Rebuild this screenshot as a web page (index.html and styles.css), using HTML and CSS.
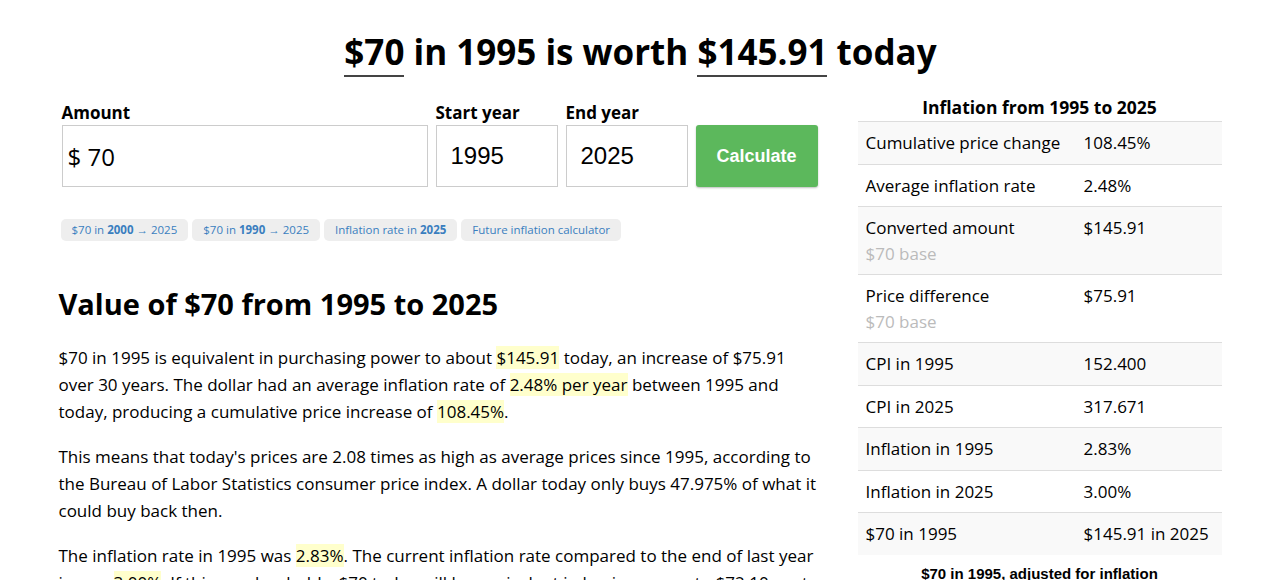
FILE: index.html
```html
<!DOCTYPE html>
<html lang="en">
<head>
  <meta charset="UTF-8" />
  <meta name="viewport" content="width=device-width, initial-scale=1.0" />
  <title>$70 in 1995 is worth $145.91 today</title>
  <link rel="stylesheet" href="styles.css">
</head>
<body>
  <main class="page">
    <h1 class="headline"><span class="mark">$70</span> in 1995 is worth <span class="mark">$145.91</span> today</h1>

    <div class="columns">
      <div class="main-col">
        <form class="calc" onsubmit="return false">
          <div class="field field-amount">
            <label for="amount">Amount</label>
            <div class="input-box input-amount">$ <span id="amount">70</span></div>
          </div>
          <div class="field">
            <label for="startYear">Start year</label>
            <div class="input-box input-year" id="startYear">1995</div>
          </div>
          <div class="field">
            <label for="endYear">End year</label>
            <div class="input-box input-year" id="endYear">2025</div>
          </div>
          <div class="field">
            <label>&nbsp;</label>
            <button class="calc-btn" type="submit">Calculate</button>
          </div>
        </form>

        <div class="pills">
          <a class="pill" href="#">$70 in <b>2000</b> &rarr; 2025</a>
          <a class="pill" href="#">$70 in <b>1990</b> &rarr; 2025</a>
          <a class="pill" href="#">Inflation rate in <b>2025</b></a>
          <a class="pill" href="#">Future inflation calculator</a>
        </div>

        <h2>Value of $70 from 1995 to 2025</h2>
        <p>$70 in 1995 is equivalent in purchasing power to about <span class="hl">$145.91</span> today, an increase of $75.91 over 30 years. The dollar had an average inflation rate of <span class="hl">2.48% per year</span> between 1995 and today, producing a cumulative price increase of <span class="hl">108.45%</span>.</p>
        <p>This means that today's prices are 2.08 times as high as average prices since 1995, according to the Bureau of Labor Statistics consumer price index. A dollar today only buys 47.975% of what it could buy back then.</p>
        <p>The inflation rate in 1995 was <span class="hl">2.83%</span>. The current inflation rate compared to the end of last year is now <span class="hl">3.00%</span>. If this number holds, $70 today will be equivalent in buying power to $72.10 next year.</p>
      </div>

      <aside class="side-col">
        <div class="side-title">Inflation from 1995 to 2025</div>
        <table class="stats">
          <tr><td>Cumulative price change</td><td>108.45%</td></tr>
          <tr><td>Average inflation rate</td><td>2.48%</td></tr>
          <tr><td>Converted amount<br><span class="muted">$70 base</span></td><td>$145.91</td></tr>
          <tr><td>Price difference<br><span class="muted">$70 base</span></td><td>$75.91</td></tr>
          <tr><td>CPI in 1995</td><td>152.400</td></tr>
          <tr><td>CPI in 2025</td><td>317.671</td></tr>
          <tr><td>Inflation in 1995</td><td>2.83%</td></tr>
          <tr><td>Inflation in 2025</td><td>3.00%</td></tr>
          <tr><td>$70 in 1995</td><td>$145.91 in 2025</td></tr>
        </table>
        <div class="chart-title">$70 in 1995, adjusted for inflation</div>
      </aside>
    </div>
  </main>
</body>
</html>
```

FILE: styles.css
```css
body {
  margin: 0;
  font-family: "Open Sans", "Noto Sans", sans-serif;
  color: #000;
  background: #fff;
}
.page {
  width: 1164px;
  margin: 0 auto;
}
.headline {
  font-size: 35px;
  font-weight: bold;
  text-align: center;
  margin: 31px 0 24px;
  line-height: 1.2;
}
.mark {
  border-bottom: 2px solid #444;
}
.columns {
  display: flex;
  gap: 40px;
  align-items: flex-start;
}
.main-col {
  width: 759px;
}
.side-col {
  width: 364px;
}

.calc {
  display: flex;
  gap: 8px;
  padding-left: 3px;
}
.field label {
  display: block;
  font-weight: bold;
  font-size: 17px;
  line-height: 24px;
  margin: 4px 0 0;
}
.input-box {
  box-sizing: border-box;
  height: 62px;
  width: 122px;
  border: 1px solid #ccc;
  display: flex;
  align-items: center;
  padding: 0 14px;
  font-family: "Liberation Sans", Arial, sans-serif;
  font-size: 24px;
}
.field-amount .input-box {
  width: 366px;
  padding-left: 5px;
  font-family: "Open Sans", sans-serif;
  white-space: pre;
}
.calc-btn {
  width: 122px;
  height: 62px;
  background: #5cb85c;
  border: none;
  border-radius: 3px;
  color: #fff;
  font-family: "Liberation Sans", Arial, sans-serif;
  font-weight: bold;
  font-size: 18px;
  box-shadow: 0 1px 2px rgba(0, 0, 0, 0.25);
}

.pills {
  display: flex;
  gap: 4px;
  margin: 32px 0 0 2px;
}
.pill {
  background: #eee;
  border-radius: 5px;
  padding: 0 11px;
  line-height: 22px;
  font-size: 11.5px;
  color: #3a7ebf;
  text-decoration: none;
}

h2 {
  font-size: 29px;
  font-weight: bold;
  margin: 46px 0 22px;
  line-height: 1.2;
}
p {
  font-size: 17px;
  line-height: 27px;
  margin: 0 0 18px;
}
.hl {
  background: #ffffcc;
}

.side-title {
  text-align: center;
  font-weight: bold;
  font-size: 17.5px;
  line-height: 22px;
  margin: -1px 0 3px;
}
.stats {
  width: 100%;
  border-collapse: collapse;
  font-size: 17px;
}
.stats td {
  border-top: 1px solid #ddd;
  padding: 8px 8px;
  line-height: 25.5px;
  vertical-align: top;
}
.stats tr:nth-child(odd) td {
  background: #f9f9f9;
}
.stats td:first-child {
  width: 202px;
}
.muted {
  color: #bbb;
}
.chart-title {
  text-align: center;
  font-family: "Liberation Sans", Arial, sans-serif;
  font-weight: bold;
  font-size: 15px;
  margin-top: 10px;
}
```
